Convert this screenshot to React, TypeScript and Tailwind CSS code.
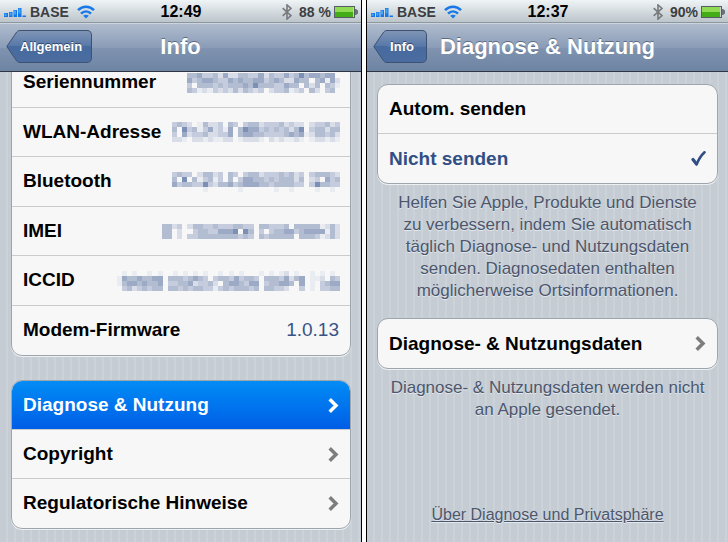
import { useState } from "react";
import type { ReactNode } from "react";
import clsx from "clsx";

const LEVELS = ["none", "#e9ecf1", "#d8dde7", "#c5ccdd", "#b3bdd1", "#9daac6", "#7c8fb5"];

const DEVICE_ROWS = [
  {
    label: "Seriennummer",
    mosaic: [
      "445334252244335243353464554550",
      "534554335454455345422544045152",
      "304443434445464443354404240431",
      "431213232424323023341230420340",
    ],
  },
  {
    label: "WLAN-Adresse",
    mosaic: [
      "343201422304303442333423220233423",
      "406341352315046553434342460344244",
      "305233422335045544333345451244342",
      "221022121122012221021211210122121",
    ],
  },
  {
    label: "Bluetooth",
    mosaic: [
      "343302442304303442333434230344432",
      "406041341304035544343444240230534",
      "534433632445345554434444330364433",
      "000000100000010000001001000010010",
    ],
  },
  {
    label: "IMEI",
    mosaic: [
      "44230244334333443304433340444441242",
      "44020034433555606403034455345555142",
      "44020334444444434304344444044431242",
    ],
  },
  {
    label: "ICCID",
    mosaic: [
      "01010010100101010100101010001010120100101010",
      "15445445504443454303443534430444352450112043",
      "14554544503344523342045543550344554050103455",
      "03423434404434344331343444340443320030103344",
    ],
  },
];

const LINK_ROWS = ["Diagnose & Nutzung", "Copyright", "Regulatorische Hinweise"];

const SEND_OPTIONS = ["Autom. senden", "Nicht senden"];

function Mosaic({ rows }: { rows: string[] }) {
  return (
    <svg
      role="img"
      aria-label="verpixelt"
      className="shrink-0"
      width={rows[0].length * 5 + 3}
      height={rows.length * 5}
      viewBox={`0 0 ${rows[0].length} ${rows.length}`}
      preserveAspectRatio="none"
      shapeRendering="crispEdges"
    >
      {rows.map((row, y) =>
        row.split("").map((level, x) => (
          <rect key={`${x}-${y}`} x={x} y={y} width="1" height="1" fill={LEVELS[Number(level)]} />
        ))
      )}
    </svg>
  );
}

function Signal() {
  return (
    <svg width="22" height="10" viewBox="0 0 22 10" aria-hidden="true">
      <g fill="#1676e6">
        <rect x="0" y="6" width="4" height="4" />
        <rect x="5" y="5" width="3.500" height="5" />
        <rect x="9.500" y="3" width="3.500" height="7" />
        <rect x="14" y="1" width="3.500" height="9" />
        <rect x="18.500" y="8.500" width="3.500" height="1.500" />
      </g>
      <g fill="#3fa6fa">
        <rect x="0.500" y="6.500" width="2" height="2.500" />
        <rect x="5.500" y="5.500" width="2" height="3" />
        <rect x="10" y="3.500" width="2" height="4" />
        <rect x="14.500" y="1.500" width="2" height="5" />
      </g>
    </svg>
  );
}

function Wifi() {
  return (
    <svg width="18" height="14" viewBox="0 0 18 14" fill="none" stroke="#1878ea" strokeWidth="2.6" aria-hidden="true">
      <path d="M1 5.2C5.6 .6 12.4 .6 17 5.2" />
      <path d="M4 8.6c3-2.9 7-2.9 10 0" />
      <path d="M9 13.6 6.2 10.800c1.600-1.500 4-1.500 5.600 0z" fill="#1878ea" stroke="none" />
    </svg>
  );
}

function Bluetooth() {
  return (
    <svg width="10" height="16" viewBox="0 0 10 16" fill="none" stroke="#77797c" strokeWidth="1.6" aria-hidden="true">
      <path d="M.7 4.2 9 11.6 5 15V1l4 3.4L.7 11.8" />
    </svg>
  );
}

function Battery() {
  return (
    <svg width="24" height="12" viewBox="0 0 24 12" aria-hidden="true">
      <rect x=".5" y=".5" width="20" height="11" fill="#c9d0cc" stroke="#585c66" />
      <rect x="1" y="1" width="18" height="5" fill="#8fdc52" />
      <rect x="1" y="6" width="18" height="5" fill="#43ad17" />
      <path d="M21 3h1l2 1.500v3L22 9h-1z" fill="#6b6f78" />
    </svg>
  );
}

function Chevron() {
  return (
    <svg className="shrink-0" width="11" height="15" viewBox="0 0 11 15" fill="none" stroke="currentColor" strokeWidth="3.5" aria-hidden="true">
      <path d="M1.7 1.3 8 7.5l-6.3 6.2" />
    </svg>
  );
}

function Check() {
  return (
    <svg className="shrink-0" width="15" height="16" viewBox="0 0 15 16" fill="none" stroke="currentColor" strokeLinecap="round" aria-hidden="true">
      <path d="M2 8.500 5.500 13" strokeWidth="3.2" />
      <path d="M5.600 13.200C7.600 8.600 10 4.600 13.500 1.300" strokeWidth="2.6" />
    </svg>
  );
}

function StatusBar({ time, battery }: { time: string; battery: string }) {
  return (
    <div className="grid h-[23px] shrink-0 grid-cols-[1fr_auto_1fr] items-center border-b border-[#8d979c] bg-linear-to-b from-[#eff4f6] to-[#bcc5cb] pr-[3px] pl-1 text-sm leading-4 font-bold text-[#3c3e41]">
      <div className="flex items-center gap-1">
        <Signal />
        <span>BASE</span>
        <span className="pl-1">
          <Wifi />
        </span>
      </div>
      <span className="text-base text-black">{time}</span>
      <div className="flex items-center justify-end gap-[3px]">
        <Bluetooth />
        <span className="pl-1">{battery}</span>
        <Battery />
      </div>
    </div>
  );
}

function BackButton({ children }: { children: ReactNode }) {
  return (
    <button
      type="button"
      className="flex h-[33px] min-w-[54px] cursor-pointer items-stretch text-[13px] font-bold text-white"
    >
      <svg className="shrink-0" width="14" height="33" viewBox="0 0 14 33" aria-hidden="true">
        <defs>
          <linearGradient id="tip" x1="0" y1="0" x2="0" y2="1">
            <stop offset="0" stopColor="#8095b5" />
            <stop offset=".5" stopColor="#5677a8" />
            <stop offset=".5" stopColor="#476b9f" />
            <stop offset="1" stopColor="#4b6c9f" />
          </linearGradient>
        </defs>
        <path d="M14 .5C12 .5 11 1.500 10 3L.8 16.500 10 30c1 1.500 2 2.500 4 2.500z" fill="url(#tip)" />
        <path d="M14 .5C12 .5 11 1.500 10 3L.8 16.500 10 30c1 1.500 2 2.500 4 2.500" fill="none" stroke="#3d5273" />
      </svg>
      <span className="flex flex-1 items-center justify-center rounded-r-[5px] border-y border-r border-[#3d5273] bg-[linear-gradient(#8095b5,#5677a8_50%,#476b9f_50%,#4b6c9f)] pr-[9px] text-shadow-[0_-1px_0_#2f4568]">
        {children}
      </span>
    </button>
  );
}

function NavBar({ back, title }: { back: string; title: string }) {
  return (
    <header className="z-10 grid h-[49px] shrink-0 grid-cols-[1fr_auto_1fr] items-center border-t border-b border-t-[#cbd5e2] border-b-[#2d3642] bg-[linear-gradient(#b0bccd,#8a9cb7_50%,#8094b1_50%,#6d84a2)] pb-[2px]">
      <div className="pl-[6px]">
        <BackButton>{back}</BackButton>
      </div>
      <h1 className="text-[22px] leading-7 font-bold whitespace-nowrap text-white text-shadow-[0_-1px_0_#5b6b85]">
        {title}
      </h1>
    </header>
  );
}

function Screen({ className, children }: { className?: string; children: ReactNode }) {
  return (
    <section
      className={clsx(
        "flex h-screen min-w-0 flex-1 flex-col overflow-hidden border-black bg-[#c5ccd4]",
        "bg-[repeating-linear-gradient(90deg,#c5ccd4_0px,#c5ccd4_6px,#cbd2d8_6px,#cbd2d8_8px)]",
        className
      )}
    >
      {children}
    </section>
  );
}

const group =
  "overflow-hidden rounded-[11px] border border-[#9fa5ad] bg-[#f7f7f7] shadow-[0_1px_0_#eef1f4] divide-y divide-[#c9cbcd]";
const row = "flex h-[49px] w-full items-center justify-between px-[11px] text-left text-[19px] font-bold";

function InfoScreen() {
  return (
    <Screen className="border-r">
      <StatusBar time="12:49" battery="88 %" />
      <NavBar back="Allgemein" title="Info" />
      <main className="-mt-[15px] flex flex-col gap-6 pr-[10px] pl-[11px]">
        <dl className={group}>
          {DEVICE_ROWS.map((item) => (
            <div
              key={item.label}
              className="flex h-[50px] items-center justify-between pr-[10px] pl-[11px] text-[19px] even:h-[49px]"
            >
              <dt className="font-bold">{item.label}</dt>
              <dd>
                <Mosaic rows={item.mosaic} />
              </dd>
            </div>
          ))}
          <div className="flex h-[49px] items-center justify-between px-[11px] text-[19px]">
            <dt className="font-bold">Modem-Firmware</dt>
            <dd className="text-[#385487]">1.0.13</dd>
          </div>
        </dl>
        <nav className={group}>
          {LINK_ROWS.map((label, i) => (
            <a
              key={label}
              href="#"
              className={clsx(row, i === 0 ? "bg-linear-to-b from-[#058cf5] to-[#015de6] text-white" : "text-black")}
            >
              {label}
              <span className={i === 0 ? "text-white" : "text-[#7d7d7d]"}>
                <Chevron />
              </span>
            </a>
          ))}
        </nav>
      </main>
    </Screen>
  );
}

function DiagnoseScreen() {
  const [selected, setSelected] = useState("Nicht senden");

  return (
    <Screen className="border-l">
      <StatusBar time="12:37" battery="90%" />
      <NavBar back="Info" title="Diagnose & Nutzung" />
      <main className="flex flex-1 flex-col px-[10px] pt-3 pb-4 text-center text-[17px] leading-[22px] text-[#4c566c] text-shadow-[0_1px_0_#e3e8ed]">
        <div className={clsx(group, "text-shadow-none")}>
          {SEND_OPTIONS.map((option) => (
            <label key={option} className={clsx(row, selected === option ? "text-[#324f85]" : "text-black")}>
              {option}
              <input
                type="radio"
                name="send"
                className="ml-auto appearance-none"
                checked={selected === option}
                onChange={() => setSelected(option)}
              />
              {selected === option && <Check />}
            </label>
          ))}
        </div>
        <p className="px-4 pt-2">
          Helfen Sie Apple, Produkte und Dienste zu verbessern, indem Sie automatisch täglich Diagnose- und
          Nutzungsdaten senden. Diagnosedaten enthalten möglicherweise Ortsinformationen.
        </p>
        <div className={clsx(group, "mt-4 text-shadow-none")}>
          <a href="#" className={clsx(row, "text-black")}>
            Diagnose- &amp; Nutzungsdaten
            <span className="text-[#7d7d7d]">
              <Chevron />
            </span>
          </a>
        </div>
        <p className="px-2 pt-2">Diagnose- &amp; Nutzungsdaten werden nicht an Apple gesendet.</p>
        <a href="#" className="mt-auto text-[16px] underline">
          Über Diagnose und Privatsphäre
        </a>
      </main>
    </Screen>
  );
}

export default function App() {
  return (
    <div className="flex gap-1 bg-white font-['Liberation_Sans',Arial,sans-serif]">
      <InfoScreen />
      <DiagnoseScreen />
    </div>
  );
}
